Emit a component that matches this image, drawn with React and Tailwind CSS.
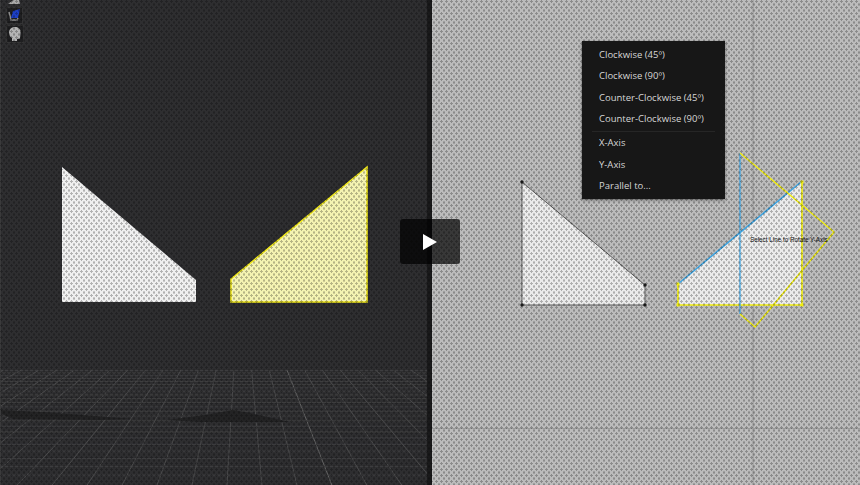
const menuTop = ["Clockwise (45º)", "Clockwise (90º)", "Counter-Clockwise (45º)", "Counter-Clockwise (90º)"];
const menuBottom = ["X-Axis", "Y-Axis", "Parallel to..."];

const VP_X = 241;
const VP_Y = 252;

// floor grid, lines run to one vanishing point
function Floor() {
  const rays = [];
  for (let k = -24; k <= 14; k++) {
    const xTop = 287 + k * 17.7;
    const slope = (xTop - VP_X) / (370 - VP_Y);
    rays.push({ x1: xTop, x2: xTop + slope * 115, main: k === 0 });
  }
  const rows = [];
  for (let n = 0; n < 24; n++) {
    rows.push(VP_Y + 1 / (0.00448 + n * 0.00018));
  }
  return (
    <svg width="427" height="116" viewBox="0 369 427 116" className="block">
      {rays.map((r, i) => (
        <line key={i} x1={r.x1} y1="370" x2={r.x2} y2="485" stroke={r.main ? "#696969" : "#4d4d4e"} strokeWidth="0.9" />
      ))}
      {rows.map((y, i) => (
        <line key={i} x1="0" y1={y} x2="427" y2={y} stroke="#464647" strokeWidth="0.7" />
      ))}
      <polygon points="0,410 43,412 133,419 100,420 13,419 0,413" fill="#232324" />
      <polygon points="167,420 205,415 233,410 250,413 290,422 200,422" fill="#232324" />
    </svg>
  );
}

function ToolIcons() {
  return (
    <div className="flex flex-col pl-[6px]">
      <svg width="16" height="4" viewBox="0 0 16 4" className="block">
        <path d="M2 4 L6 1 L8 0 L13 0 L14 4 Z" fill="#a9a9a9" />
      </svg>
      <div className="mt-[3px] w-[17px] h-[17px] bg-[#1f1f21] border border-[#343435]">
        <svg width="15" height="15" viewBox="0 0 15 15" className="block">
          <path d="M2 4 L4 12 L10 12 L11 10" fill="none" stroke="#8c8c8c" strokeWidth="1.5" />
          <path d="M6 3 L13 1 L11 10 L4 10 Z" fill="#1c3fc4" />
        </svg>
      </div>
      <div className="mt-[1px] w-[18px] h-[18px] bg-[#1f1f21] border border-[#343435]">
        <svg width="16" height="16" viewBox="0 0 16 16" className="block">
          <path d="M8 1 C4 1 2 3.5 2 7 C2 9.5 3.5 11 5 12 L5 15 L10 15 L10 13 L13 12.5 L13.5 7 C14 3.5 12 1 8 1 Z" fill="#b4b4b4" />
        </svg>
      </div>
    </div>
  );
}

function LeftShapes() {
  return (
    <svg width="427" height="145" viewBox="0 165 427 145" className="block">
      <polygon points="62,167 196,280 196,302 62,302" fill="#f0f0f0" />
      <polygon points="367,167 231,279 231,302 367,302" fill="#f4f3b2" stroke="#f0e81a" strokeWidth="1.5" />
    </svg>
  );
}

function RightDrawing() {
  return (
    <svg width="428" height="485" viewBox="432 0 428 485" className="block">
      <line x1="753" y1="0" x2="753" y2="485" stroke="#929292" strokeWidth="1" />
      <line x1="432" y1="428.5" x2="860" y2="428.5" stroke="#9a9a9a" strokeWidth="1" />

      <polygon points="522,182 645,285 645,305 522,305" fill="#ebebeb" stroke="#5a5a5a" strokeWidth="1" />
      {[[522, 182], [645, 285], [645, 305], [522, 305]].map(([x, y]) => (
        <circle key={x + "-" + y} cx={x} cy={y} r="1.7" fill="#1c1c1c" />
      ))}

      <polygon points="678,284 801,182 802,305 678,305" fill="#ebebeb" />
      <polyline points="678,284 678,305 802,305 802,182" fill="none" stroke="#f2ee10" strokeWidth="1.6" />
      <line x1="678" y1="284" x2="801" y2="182" stroke="#3fa4e0" strokeWidth="1.6" />
      <line x1="740" y1="153" x2="740" y2="314" stroke="#3fa4e0" strokeWidth="1.3" />
      <polyline points="740,153 834,232 755,327 740,314" fill="none" stroke="#f2ee10" strokeWidth="1.4" />
      {[[678, 284], [678, 305], [802, 305], [802, 182]].map(([x, y]) => (
        <rect key={x + "-" + y} x={x - 1.5} y={y - 1.5} width="3" height="3" fill="#f2ee10" />
      ))}
    </svg>
  );
}

function RotateMenu() {
  return (
    <div className="absolute left-[150px] top-[41px] z-10 w-[143px] h-[158px] bg-[#171717] shadow-[0_1px_3px_rgba(0,0,0,0.45)] pt-[3px] font-['Open_Sans','Noto_Sans',sans-serif] text-[9.5px] text-[#d6d6d6]">
      {menuTop.map((t) => (
        <div key={t} className="h-[21.6px] pl-[17px] flex items-center whitespace-nowrap">{t}</div>
      ))}
      <div className="mx-[10px] my-[0.5px] h-px bg-[#262626]" />
      {menuBottom.map((t) => (
        <div key={t} className="h-[21.6px] pl-[17px] flex items-center whitespace-nowrap">{t}</div>
      ))}
    </div>
  );
}

export default function App() {
  return (
    <div className="relative w-[860px] h-[485px] overflow-hidden flex bg-[#bcbcbc]">
      <div className="relative w-[427px] h-full flex flex-col bg-[#2e2e30]">
        <ToolIcons />
        <div className="absolute left-0 top-[165px]">
          <LeftShapes />
        </div>
        <div className="mt-auto">
          <Floor />
        </div>
        <div className="absolute left-0 top-0 w-px h-full bg-[#3a3a3b]" />
      </div>
      <div className="w-[5px] h-full bg-[#1a1a1b]" />
      <div className="relative flex-1 h-full">
        <RightDrawing />
        <div className="absolute left-[318px] top-[236px] z-10 text-[6.3px] leading-[7px] text-[#111] whitespace-nowrap font-['Liberation_Sans',sans-serif]">
          Select Line to Rotate Y-Axis
        </div>
        <RotateMenu />
      </div>

      {/* dot screen over the whole frame */}
      <div className="absolute inset-0 pointer-events-none bg-[radial-gradient(circle_at_1.5px_1.5px,rgba(0,0,0,0.26)_1px,transparent_1.3px),radial-gradient(circle_at_4px_4.5px,rgba(0,0,0,0.26)_1px,transparent_1.3px)] bg-[length:5px_6px]" />

      <div className="absolute left-[400px] top-[219px] z-20 w-[60px] h-[45px] rounded-[3px] bg-black/70 flex items-center justify-center">
        <svg width="16" height="18" viewBox="0 0 16 18">
          <polygon points="1,1 15,9 1,17" fill="#ffffff" />
        </svg>
      </div>
    </div>
  );
}
